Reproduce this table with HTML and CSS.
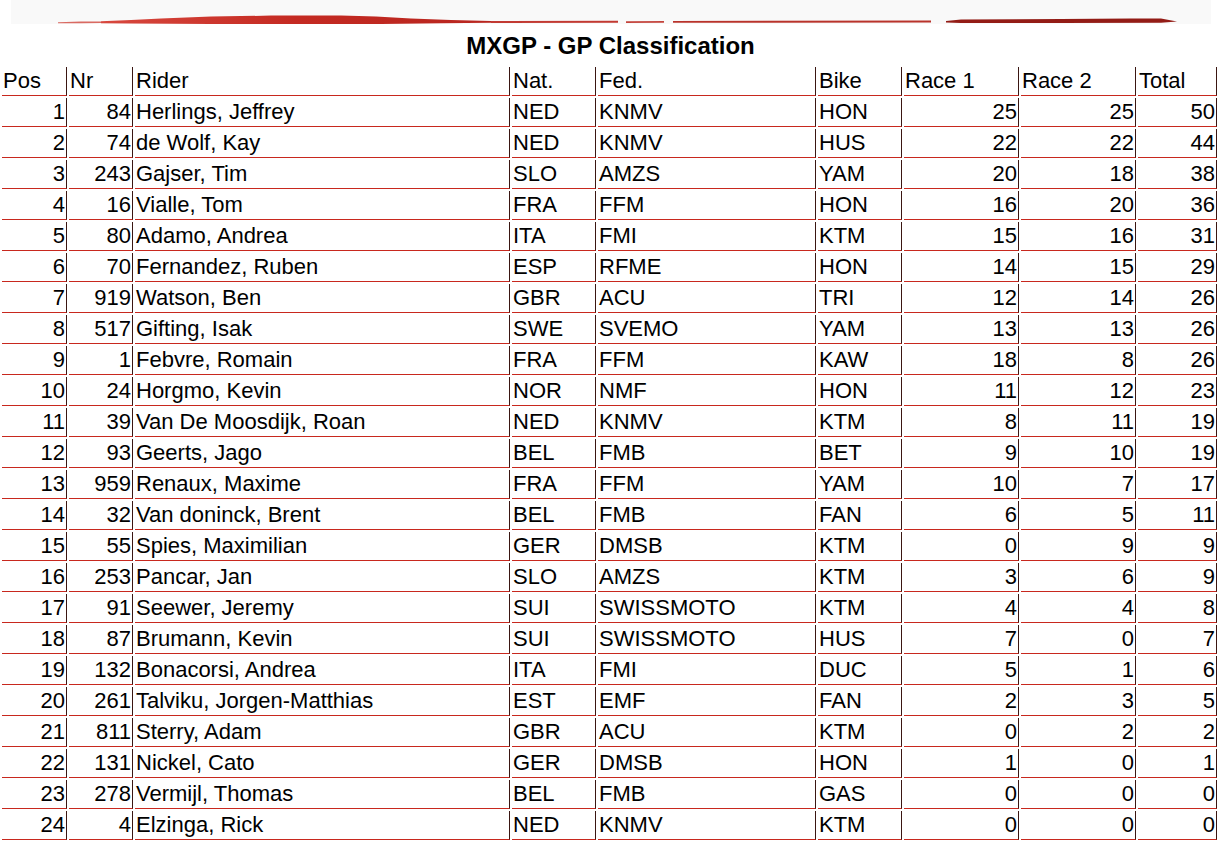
FILE: index.html
```html
<!DOCTYPE html>
<html lang="en">
<head>
<meta charset="utf-8">
<title>MXGP - GP Classification</title>
<link rel="stylesheet" href="styles.css">
</head>
<body>
<div class="banner">
<svg width="1200" height="24" viewBox="0 0 1200 24" xmlns="http://www.w3.org/2000/svg">
<defs>
<linearGradient id="g1" x1="0" y1="0" x2="1" y2="0">
<stop offset="0" stop-color="#d8483e"/>
<stop offset="0.5" stop-color="#c42a22"/>
<stop offset="1" stop-color="#b8261f"/>
</linearGradient>
</defs>
<rect x="0" y="0" width="1200" height="24" fill="#f9f9f9"/>
<path d="M47,22.2 L70,21.6 L90,21.4 L90,23 L70,23.2 L47,23.2 Z" fill="#d96a62"/>
<path d="M90,21.2 L120,20 L150,18.6 L200,16.6 L260,15.6 L330,15.4 L365,16.6 L400,18.6 L440,20 L480,21 L480,22.8 L430,23.3 L370,24 L300,24 L200,24 L120,23.6 L90,23.2 Z" fill="url(#g1)"/>
<path d="M480,21 L607,20.8 L607,22.8 L480,22.9 Z" fill="#c23a32"/>
<path d="M615,21.2 L653,21 L653,22.8 L615,22.9 Z" fill="#c4443c"/>
<path d="M662,21 L920,20.4 L920,22.6 L662,22.8 Z" fill="#b9332b"/>
<path d="M935,21 L950,19.6 L1050,19 L1120,18.6 L1150,18.6 L1166,21.6 L1150,22.8 L1050,22.9 L950,23 L935,22.6 Z" fill="#931c16"/>
</svg>
</div>
<h1 class="title">MXGP - GP Classification</h1>
<table class="results">
<thead>
<tr>
<th class="c-pos">Pos</th>
<th class="c-nr">Nr</th>
<th class="c-rider">Rider</th>
<th class="c-nat">Nat.</th>
<th class="c-fed">Fed.</th>
<th class="c-bike">Bike</th>
<th class="c-r1">Race 1</th>
<th class="c-r2">Race 2</th>
<th class="c-tot">Total</th>
</tr>
</thead>
<tbody>
<tr><td class="num">1</td><td class="num">84</td><td>Herlings, Jeffrey</td><td>NED</td><td>KNMV</td><td>HON</td><td class="num">25</td><td class="num">25</td><td class="num">50</td></tr>
<tr><td class="num">2</td><td class="num">74</td><td>de Wolf, Kay</td><td>NED</td><td>KNMV</td><td>HUS</td><td class="num">22</td><td class="num">22</td><td class="num">44</td></tr>
<tr><td class="num">3</td><td class="num">243</td><td>Gajser, Tim</td><td>SLO</td><td>AMZS</td><td>YAM</td><td class="num">20</td><td class="num">18</td><td class="num">38</td></tr>
<tr><td class="num">4</td><td class="num">16</td><td>Vialle, Tom</td><td>FRA</td><td>FFM</td><td>HON</td><td class="num">16</td><td class="num">20</td><td class="num">36</td></tr>
<tr><td class="num">5</td><td class="num">80</td><td>Adamo, Andrea</td><td>ITA</td><td>FMI</td><td>KTM</td><td class="num">15</td><td class="num">16</td><td class="num">31</td></tr>
<tr><td class="num">6</td><td class="num">70</td><td>Fernandez, Ruben</td><td>ESP</td><td>RFME</td><td>HON</td><td class="num">14</td><td class="num">15</td><td class="num">29</td></tr>
<tr><td class="num">7</td><td class="num">919</td><td>Watson, Ben</td><td>GBR</td><td>ACU</td><td>TRI</td><td class="num">12</td><td class="num">14</td><td class="num">26</td></tr>
<tr><td class="num">8</td><td class="num">517</td><td>Gifting, Isak</td><td>SWE</td><td>SVEMO</td><td>YAM</td><td class="num">13</td><td class="num">13</td><td class="num">26</td></tr>
<tr><td class="num">9</td><td class="num">1</td><td>Febvre, Romain</td><td>FRA</td><td>FFM</td><td>KAW</td><td class="num">18</td><td class="num">8</td><td class="num">26</td></tr>
<tr><td class="num">10</td><td class="num">24</td><td>Horgmo, Kevin</td><td>NOR</td><td>NMF</td><td>HON</td><td class="num">11</td><td class="num">12</td><td class="num">23</td></tr>
<tr><td class="num">11</td><td class="num">39</td><td>Van De Moosdijk, Roan</td><td>NED</td><td>KNMV</td><td>KTM</td><td class="num">8</td><td class="num">11</td><td class="num">19</td></tr>
<tr><td class="num">12</td><td class="num">93</td><td>Geerts, Jago</td><td>BEL</td><td>FMB</td><td>BET</td><td class="num">9</td><td class="num">10</td><td class="num">19</td></tr>
<tr><td class="num">13</td><td class="num">959</td><td>Renaux, Maxime</td><td>FRA</td><td>FFM</td><td>YAM</td><td class="num">10</td><td class="num">7</td><td class="num">17</td></tr>
<tr><td class="num">14</td><td class="num">32</td><td>Van doninck, Brent</td><td>BEL</td><td>FMB</td><td>FAN</td><td class="num">6</td><td class="num">5</td><td class="num">11</td></tr>
<tr><td class="num">15</td><td class="num">55</td><td>Spies, Maximilian</td><td>GER</td><td>DMSB</td><td>KTM</td><td class="num">0</td><td class="num">9</td><td class="num">9</td></tr>
<tr><td class="num">16</td><td class="num">253</td><td>Pancar, Jan</td><td>SLO</td><td>AMZS</td><td>KTM</td><td class="num">3</td><td class="num">6</td><td class="num">9</td></tr>
<tr><td class="num">17</td><td class="num">91</td><td>Seewer, Jeremy</td><td>SUI</td><td>SWISSMOTO</td><td>KTM</td><td class="num">4</td><td class="num">4</td><td class="num">8</td></tr>
<tr><td class="num">18</td><td class="num">87</td><td>Brumann, Kevin</td><td>SUI</td><td>SWISSMOTO</td><td>HUS</td><td class="num">7</td><td class="num">0</td><td class="num">7</td></tr>
<tr><td class="num">19</td><td class="num">132</td><td>Bonacorsi, Andrea</td><td>ITA</td><td>FMI</td><td>DUC</td><td class="num">5</td><td class="num">1</td><td class="num">6</td></tr>
<tr><td class="num">20</td><td class="num">261</td><td>Talviku, Jorgen-Matthias</td><td>EST</td><td>EMF</td><td>FAN</td><td class="num">2</td><td class="num">3</td><td class="num">5</td></tr>
<tr><td class="num">21</td><td class="num">811</td><td>Sterry, Adam</td><td>GBR</td><td>ACU</td><td>KTM</td><td class="num">0</td><td class="num">2</td><td class="num">2</td></tr>
<tr><td class="num">22</td><td class="num">131</td><td>Nickel, Cato</td><td>GER</td><td>DMSB</td><td>HON</td><td class="num">1</td><td class="num">0</td><td class="num">1</td></tr>
<tr><td class="num">23</td><td class="num">278</td><td>Vermijl, Thomas</td><td>BEL</td><td>FMB</td><td>GAS</td><td class="num">0</td><td class="num">0</td><td class="num">0</td></tr>
<tr><td class="num">24</td><td class="num">4</td><td>Elzinga, Rick</td><td>NED</td><td>KNMV</td><td>KTM</td><td class="num">0</td><td class="num">0</td><td class="num">0</td></tr>
</tbody>
</table>
</body>
</html>
```
FILE: styles.css
```css
html, body {
  margin: 0;
  padding: 0;
  background: #ffffff;
  color: #000000;
  font-family: "Liberation Sans", Arial, Helvetica, sans-serif;
}

.banner {
  width: 1200px;
  height: 24px;
  margin: 0 auto;
}

.banner svg {
  display: block;
}

.title {
  margin: 8px 0 5px 0;
  font-size: 24px;
  line-height: 28px;
  font-weight: bold;
  text-align: center;
}

.results {
  width: 1219px;
  table-layout: fixed;
  border-collapse: separate;
  border-spacing: 2px;
  font-size: 22px;
}

.results th,
.results td {
  box-sizing: border-box;
  padding: 0 1px;
  line-height: 28px;
  height: 29px;
  vertical-align: middle;
  text-align: left;
  font-weight: normal;
  white-space: nowrap;
  overflow: hidden;
  border-right: 1px solid #3a1612;
  border-bottom: 1px solid #c8281e;
}

.results td.num {
  text-align: right;
}

.c-pos { width: 65px; }
.c-nr { width: 64px; }
.c-rider { width: 375px; }
.c-nat { width: 84px; }
.c-fed { width: 218px; }
.c-bike { width: 84px; }
.c-r1 { width: 115px; }
.c-r2 { width: 115px; }
.c-tot { width: 79px; }
```
